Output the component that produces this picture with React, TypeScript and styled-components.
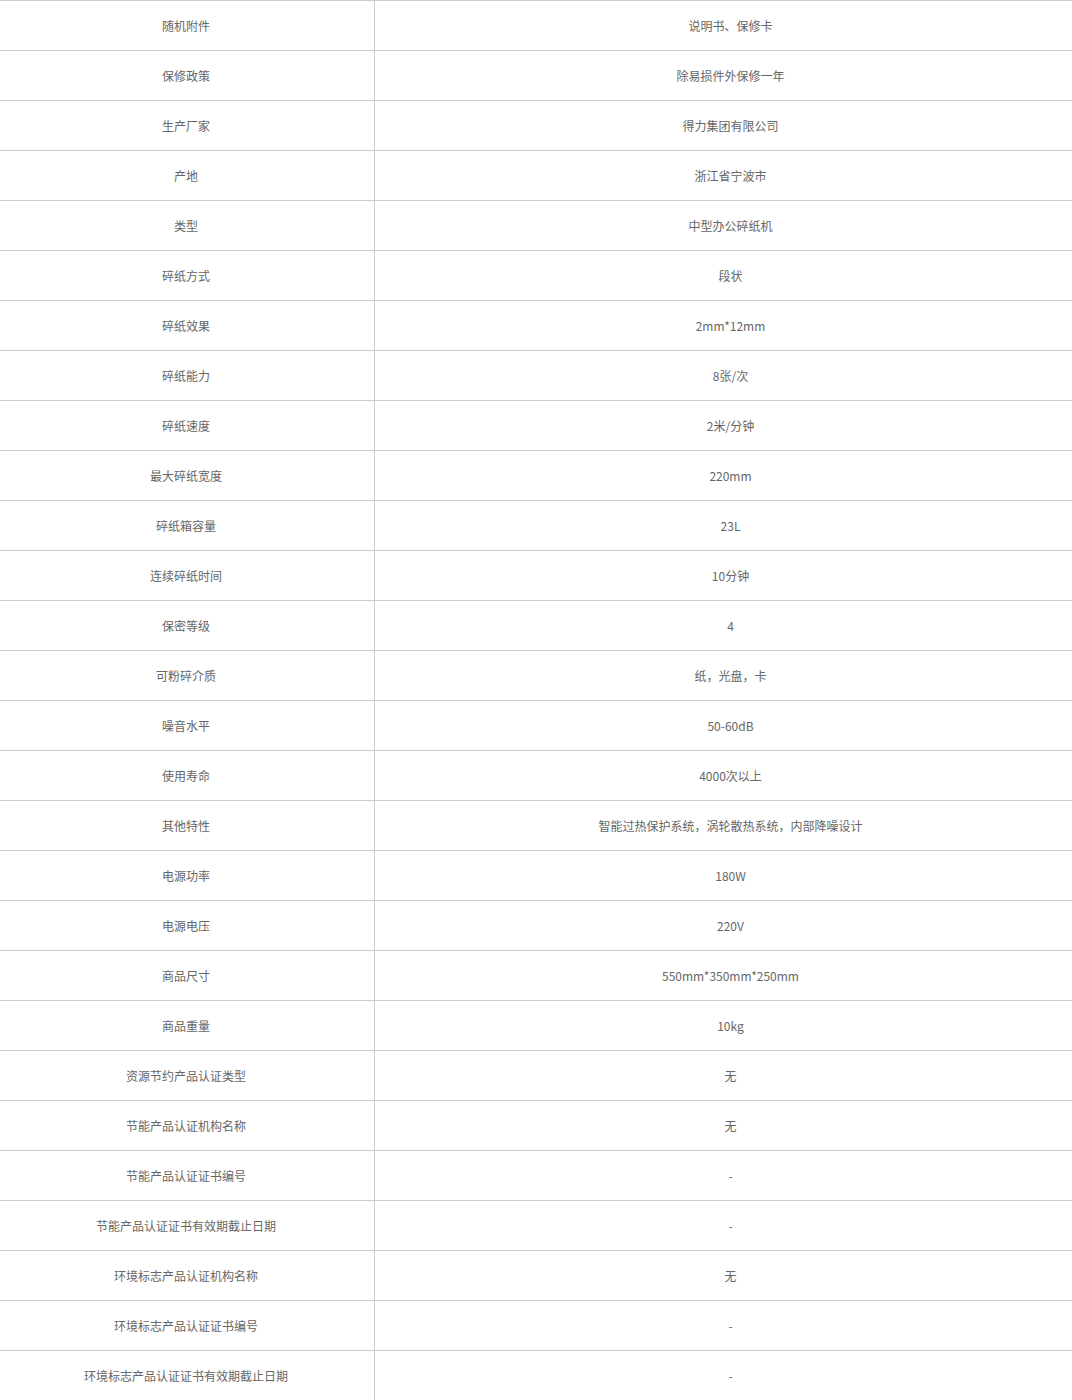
import styled, { createGlobalStyle } from 'styled-components';

const GlobalStyle = createGlobalStyle`
  html, body {
    margin: 0;
    padding: 0;
    background: #fff;
    overflow-x: hidden;
  }
`;

const Table = styled.div`
  width: 1086px;
  font-family: 'Microsoft YaHei', 'Noto Sans CJK SC', 'Noto Sans', sans-serif;
  font-size: 12px;
  color: #666;
`;

const Row = styled.div`
  display: grid;
  grid-template-columns: 375px 1fr;
  height: 50px;
  box-sizing: border-box;
  border-top: 1px solid #ccc;
`;

const Cell = styled.div<{ $label?: boolean }>`
  display: flex;
  align-items: center;
  justify-content: center;
  box-sizing: border-box;
  padding-bottom: 1px;
  ${(p) => p.$label && 'border-right: 1px solid #ccc; padding-right: 2px;'}
`;

const specs: [string, string][] = [
  ['随机附件', '说明书、保修卡'],
  ['保修政策', '除易损件外保修一年'],
  ['生产厂家', '得力集团有限公司'],
  ['产地', '浙江省宁波市'],
  ['类型', '中型办公碎纸机'],
  ['碎纸方式', '段状'],
  ['碎纸效果', '2mm*12mm'],
  ['碎纸能力', '8张/次'],
  ['碎纸速度', '2米/分钟'],
  ['最大碎纸宽度', '220mm'],
  ['碎纸箱容量', '23L'],
  ['连续碎纸时间', '10分钟'],
  ['保密等级', '4'],
  ['可粉碎介质', '纸，光盘，卡'],
  ['噪音水平', '50-60dB'],
  ['使用寿命', '4000次以上'],
  ['其他特性', '智能过热保护系统，涡轮散热系统，内部降噪设计'],
  ['电源功率', '180W'],
  ['电源电压', '220V'],
  ['商品尺寸', '550mm*350mm*250mm'],
  ['商品重量', '10kg'],
  ['资源节约产品认证类型', '无'],
  ['节能产品认证机构名称', '无'],
  ['节能产品认证证书编号', '-'],
  ['节能产品认证证书有效期截止日期', '-'],
  ['环境标志产品认证机构名称', '无'],
  ['环境标志产品认证证书编号', '-'],
  ['环境标志产品认证证书有效期截止日期', '-'],
];

export default function App() {
  return (
    <>
      <GlobalStyle />
      <Table>
        {specs.map(([label, value]) => (
          <Row key={label}>
            <Cell $label>{label}</Cell>
            <Cell>{value}</Cell>
          </Row>
        ))}
      </Table>
    </>
  );
}
